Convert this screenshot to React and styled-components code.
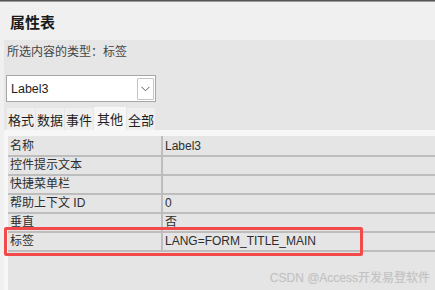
import React from "react";
import styled, { createGlobalStyle } from "styled-components";

const Global = createGlobalStyle`
  html, body { margin: 0; padding: 0; background: #f0f0f0; }
  body { font-family: "Liberation Sans", "Noto Sans CJK SC", sans-serif; }
`;

const Window = styled.div`
  width: 435px;
  height: 290px;
  box-sizing: border-box;
  background: #f0f0f0;
  border-top: 1px solid #555;
  box-shadow: inset 0 1px 0 #9a9a9a;
  display: flex;
  flex-direction: column;
  overflow: hidden;
  position: relative;
`;

const Header = styled.div`
  height: 39px;
  display: flex;
  align-items: center;
  padding-left: 10px;
  padding-top: 2px;
  box-sizing: border-box;
`;

const Title = styled.span`
  font-family: "Noto Sans CJK SC", sans-serif;
  font-size: 15px;
  font-weight: 700;
  color: #1a1a1a;
`;

const Body = styled.div`
  flex: 1;
  margin-left: 4px;
  background: #e6e6e6;
  display: flex;
  flex-direction: column;
  min-height: 0;
`;

const TypeLine = styled.div`
  padding: 3px 0 0 3px;
  height: 18px;
  line-height: 18px;
  font-size: 12px;
  color: #444;
`;

const Combo = styled.div`
  margin: 14px 0 0 2px;
  width: 150px;
  height: 27px;
  box-sizing: border-box;
  background: #fff;
  border: 1px solid #a6a6a6;
  display: flex;
  align-items: center;
  padding: 0 1px 0 4px;
`;

const ComboText = styled.span`
  flex: 1;
  font-size: 12.5px;
  color: #1e1e1e;
`;

const ComboButton = styled.div`
  width: 17px;
  height: 22px;
  box-sizing: border-box;
  border: 1px solid #c4c4c4;
  border-radius: 1px;
  background: #fff;
  display: flex;
  align-items: center;
  justify-content: center;
`;

const Tabs = styled.div`
  margin: 5px 0 0 3px;
  height: 23px;
  display: flex;
  align-items: flex-end;
  gap: 1px;
`;

const Tab = styled.div`
  height: ${(p) => (p.$active ? 23 : 22)}px;
  padding: 0 ${(p) => (p.$active ? 3 : 1)}px;
  box-sizing: border-box;
  background: ${(p) => (p.$active ? "#f7f7f7" : "#efefef")};
  font-size: 13px;
  color: #1e1e1e;
  display: flex;
  align-items: center;
  justify-content: center;
`;

const Panel = styled.div`
  flex: 1;
  background: #f7f7f7;
  padding: 6px 0 0 4px;
  display: flex;
  flex-direction: column;
  min-height: 0;
`;

const Grid = styled.div`
  flex: 1;
  background: #e5e5e5;
  padding-top: 2px;
  position: relative;
`;

const Row = styled.div`
  display: grid;
  grid-template-columns: 153px 2px 1fr;
  height: 19px;
  box-sizing: border-box;
  border-bottom: 2px solid #bdbdbd;
`;

const Cell = styled.div`
  height: 17px;
  line-height: 17px;
  padding-left: 2px;
  font-size: 12px;
  color: #2e2e2e;
  white-space: nowrap;
  overflow: hidden;
`;

const Sep = styled.div`
  background: #bdbdbd;
  margin-top: -2px;
  height: 19px;
`;

const Highlight = styled.div`
  position: absolute;
  left: -4px;
  top: 91px;
  width: 359px;
  height: 29px;
  box-sizing: border-box;
  border: 3px solid #f24a4a;
  border-radius: 2px;
  pointer-events: none;
`;

const Watermark = styled.div`
  position: absolute;
  right: 5px;
  bottom: 5px;
  font-size: 12px;
  color: #c2c2c2;
  text-shadow: 0 0 1px #d8d8d8;
`;

const rows = [
  ["名称", "Label3"],
  ["控件提示文本", ""],
  ["快捷菜单栏", ""],
  ["帮助上下文 ID", "0"],
  ["垂直", "否"],
  ["标签", "LANG=FORM_TITLE_MAIN"],
];

const tabs = ["格式", "数据", "事件", "其他", "全部"];

export default function App() {
  return (
    <>
      <Global />
      <Window>
        <Header>
          <Title>属性表</Title>
        </Header>
        <Body>
          <TypeLine>所选内容的类型：标签</TypeLine>
          <Combo>
            <ComboText>Label3</ComboText>
            <ComboButton>
              <svg width="9" height="6" viewBox="0 0 9 6">
                <path d="M0.5 0.8 L4.5 4.8 L8.5 0.8" fill="none" stroke="#606060" strokeWidth="1" />
              </svg>
            </ComboButton>
          </Combo>
          <Tabs>
            {tabs.map((t) => (
              <Tab key={t} $active={t === "其他"}>
                {t}
              </Tab>
            ))}
          </Tabs>
          <Panel>
            <Grid>
              {rows.map(([k, v]) => (
                <Row key={k}>
                  <Cell>{k}</Cell>
                  <Sep />
                  <Cell>{v}</Cell>
                </Row>
              ))}
              <Highlight />
            </Grid>
          </Panel>
        </Body>
        <Watermark>CSDN @Access开发易登软件</Watermark>
      </Window>
    </>
  );
}
